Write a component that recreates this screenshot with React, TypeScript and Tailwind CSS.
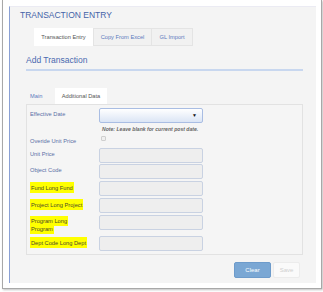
import React from "react";

const font = { fontFamily: '"Liberation Sans", Arial, sans-serif' };

function Row({
  label,
  hl,
  children,
  className = "",
}: {
  label: React.ReactNode;
  hl?: boolean;
  children?: React.ReactNode;
  className?: string;
}) {
  return (
    <div className={`flex items-start ${className}`}>
      <div className="w-[72px] pl-[3px] pt-[1px] text-[5.7px] leading-[10px]">
        {hl ? (
          <span className="bg-[#ffff00] text-[#4a4a2a] px-[1px] py-[2.5px] [box-decoration-break:clone]">
            {label}
          </span>
        ) : (
          <span className="text-[#5a6fa6]">{label}</span>
        )}
      </div>
      {children}
    </div>
  );
}

function Input() {
  return (
    <div className="w-[104px] h-[15px] bg-[#eeeeee] border border-[#c9d2e2] rounded-[2px]" />
  );
}

export default function App() {
  return (
    <div className="w-[323px] h-[292px] bg-white pl-[2px]" style={font}>
      <div className="w-[320px] h-[289px] border-l border-r border-b border-[#a8a8a8] shadow-[1px_1px_2px_rgba(0,0,0,0.25)] pt-[6px] pl-[6px]">
        <div className="w-[307px] h-[277px] bg-[#f4f4f4] border-l border-[#8aa0d4] border-t border-t-[#ebebf3]">
          {/* Title */}
          <div className="mt-[2px] pl-[10px] h-[12px] text-[8.5px] leading-[12px] text-[#4563a8]">
            TRANSACTION ENTRY
          </div>
          {/* Top tabs */}
          <div className="mt-[7px] pl-[24px] flex h-[18px] text-[5.7px]">
            <div className="w-[59px] h-[18px] bg-white flex items-center justify-center text-[#555]">
              Transaction Entry
            </div>
            <div className="w-[59px] h-[18px] bg-[#f1f1f1] border border-[#e4e4e4] flex items-center justify-center text-[#5b79bd]">
              Copy From Excel
            </div>
            <div className="w-[41px] h-[18px] bg-[#f1f1f1] border border-l-0 border-[#e4e4e4] flex items-center justify-center text-[#5b79bd]">
              GL Import
            </div>
          </div>
          {/* Section */}
          <div className="pl-[16px] w-[293px]">
            <div className="mt-[8px] h-[12px] text-[8.5px] leading-[12px] text-[#4a69b0]">
              Add Transaction
            </div>
            <div className="mt-[3px] h-[2px] bg-[#c8d7ef]" />
            {/* inner tabs */}
            <div className="mt-[17px] flex h-[16px] text-[5.7px]">
              <div className="w-[29px] h-[16px] pl-[4px] flex items-center text-[#5b79bd]">
                Main
              </div>
              <div className="w-[52px] h-[16px] bg-white flex items-center justify-center text-[#555]">
                Additional Data
              </div>
            </div>
            {/* content box */}
            <div className="w-[277px] h-[151px] border border-[#e2e2e2] bg-[#f5f5f5] pt-[3px]">
              <Row label="Effective Date">
                <div className="w-[104px] h-[15px] border border-[#a9bde3] rounded-[2px] bg-gradient-to-b from-[#ffffff] to-[#dbe5f5] flex items-center justify-end pr-[5px]">
                  <span className="text-[5px] text-[#111] leading-none">▼</span>
                </div>
              </Row>
              <div className="mt-[2px] pl-[75px] h-[8px] text-[5.1px] leading-[8px] font-bold italic text-[#666]">
                Note: Leave blank for current post date.
              </div>
              <Row label="Overide Unit Price" className="mt-[2px] h-[11px]">
                <div className="ml-[2px] mt-[1px] w-[5px] h-[5px] border border-[#cfcfcf] rounded-[1px] bg-[#f0f0f0]" />
              </Row>
              <Row label="Unit Price" className="mt-[2px]">
                <Input />
              </Row>
              <Row label="Object Code" className="mt-[1px]">
                <Input />
              </Row>
              <Row label="Fund Long Fund" hl className="mt-[2px]">
                <Input />
              </Row>
              <Row label="Project Long Project" hl className="mt-[2px]">
                <Input />
              </Row>
              <div className="mt-[2px] flex items-start">
                <div className="w-[72px] pl-[3px] pt-[2px] text-[5.7px] leading-[8px]">
                  <span className="bg-[#ffff00] text-[#4a4a2a] px-[1px] py-[2px] [box-decoration-break:clone] [-webkit-box-decoration-break:clone]">
                    Program Long
                    <br />
                    Program
                  </span>
                </div>
                <Input />
              </div>
              <Row label="Dept Code Long Dept" hl className="mt-[3px]">
                <Input />
              </Row>
            </div>
            {/* buttons */}
            <div className="mt-[7px] flex justify-end gap-[2px] pr-[3px]">
              <div className="w-[37px] h-[16px] bg-[#7aa7d4] border border-[#6d9bcb] rounded-[2px] flex items-center justify-center text-[6px] text-white">
                Clear
              </div>
              <div className="w-[27px] h-[16px] bg-[#fafafa] border border-[#ececec] rounded-[2px] flex items-center justify-center text-[6px] text-[#cfcfcf]">
                Save
              </div>
            </div>
          </div>
        </div>
      </div>
    </div>
  );
}
